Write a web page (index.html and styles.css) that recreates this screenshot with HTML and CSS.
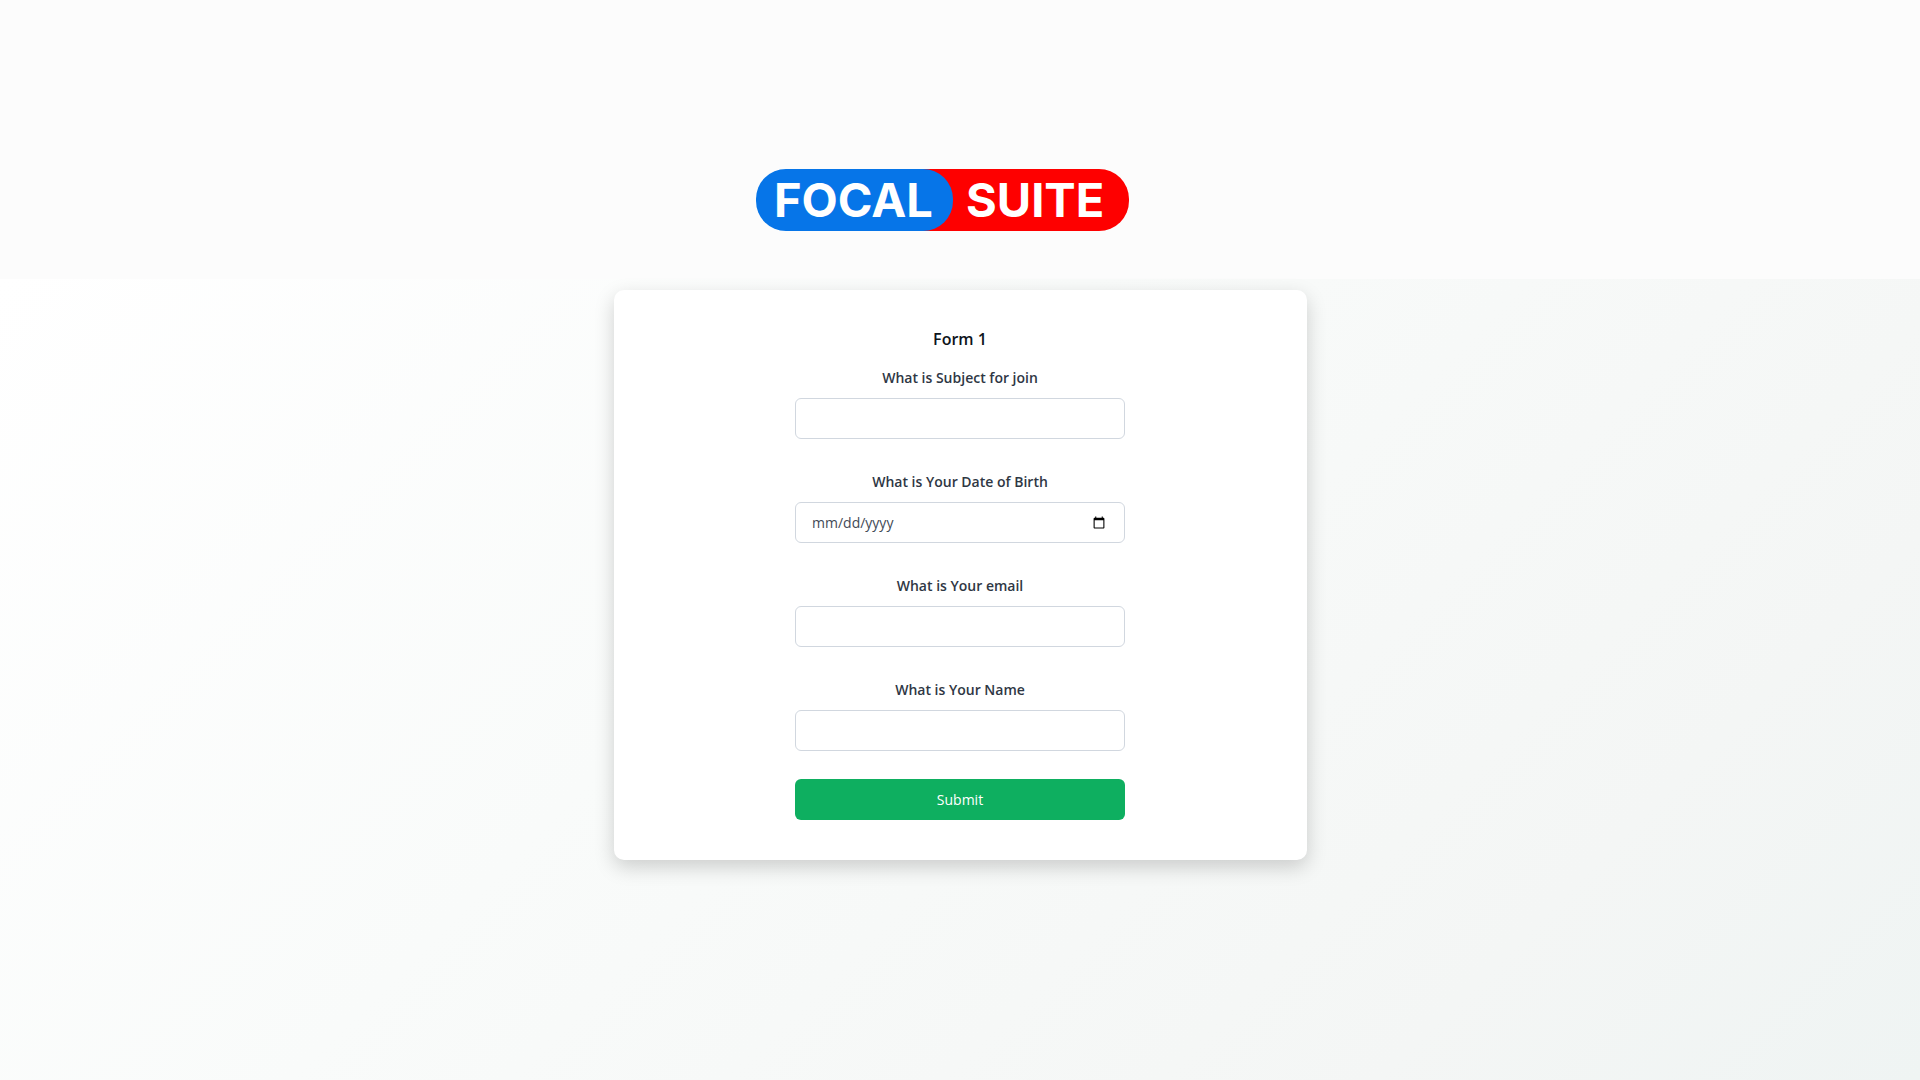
FILE: index.html
```html
<!DOCTYPE html>
<html lang="en">
<head>
<meta charset="utf-8">
<meta name="viewport" content="width=device-width, initial-scale=1">
<title>Form 1 - Focal Suite</title>
<link rel="stylesheet" href="styles.css">
</head>
<body>
<header class="page-header">
  <svg class="logo" viewBox="0 0 408 62" role="img" aria-label="Focal Suite">
    <rect class="logo-red" x="120" width="253" height="62" rx="30"/>
    <rect class="logo-blue" width="197" height="62" rx="30"/>
    <text class="logo-text" x="18" y="48">FOCAL</text>
    <text class="logo-text" x="210" y="48">SUITE</text>
  </svg>
</header>
<main class="page-main">
  <section class="card">
    <form class="form">
      <h1 class="form-title">Form 1</h1>
      <div class="field">
        <label class="label" for="subject">What is Subject for join</label>
        <input class="input" id="subject" type="text">
      </div>
      <div class="field">
        <label class="label" for="birth">What is Your Date of Birth</label>
        <input class="input" id="birth" type="date">
      </div>
      <div class="field">
        <label class="label" for="email">What is Your email</label>
        <input class="input" id="email" type="email">
      </div>
      <div class="field">
        <label class="label" for="name">What is Your Name</label>
        <input class="input" id="name" type="text">
      </div>
      <button class="submit" type="submit">Submit</button>
    </form>
  </section>
</main>
</body>
</html>
```
FILE: styles.css
```css
* {
  box-sizing: border-box;
}

body {
  margin: 0;
  min-height: 100vh;
  display: flex;
  flex-direction: column;
  font-family: "Open Sans", "Noto Sans", sans-serif;
  font-size: 14px;
  line-height: 21px;
  color: #2f3744;
  background: #fff;
}

.page-header {
  display: flex;
  justify-content: center;
  padding: 169px 16px 48px;
  background: #fcfcfc;
}

.logo {
  width: 408px;
  max-width: 100%;
  height: auto;
}

.logo-red {
  fill: #fe0000;
}

.logo-blue {
  fill: #0675e8;
}

.logo-text {
  fill: #fff;
  font-family: Inter, sans-serif;
  font-size: 47px;
  font-weight: 700;
}

.page-main {
  flex: 1;
  padding: 11px 16px 40px;
  background: linear-gradient(135deg, #fff 0%, #f9fbfa 40%, #f4f6f5 80%, #eff4f3 100%);
}

.card {
  max-width: 693px;
  margin: 0 auto;
  padding: 37px 16px 40px;
  border-radius: 10px;
  background: #fff;
  box-shadow: 0 7px 20px rgba(0, 0, 0, 0.18);
}

.form {
  display: flex;
  flex-direction: column;
  max-width: 330px;
  margin: 0 auto;
}

.form-title {
  margin: 0 0 16px;
  font-size: 16px;
  font-weight: 600;
  line-height: 24px;
  text-align: center;
  color: #0e141b;
}

.field {
  display: flex;
  flex-direction: column;
  gap: 10px;
  margin-bottom: 32px;
}

.field:last-of-type {
  margin-bottom: 28px;
}

.label {
  font-weight: 600;
  text-align: center;
}

.input {
  width: 100%;
  height: 41px;
  padding: 8px 16px;
  border: 1px solid #d1d7df;
  border-radius: 6px;
  font: inherit;
  color: #434a56;
  background: #fff;
}

.input::-webkit-datetime-edit-month-field,
.input::-webkit-datetime-edit-day-field,
.input::-webkit-datetime-edit-year-field {
  padding: 0;
}

.submit {
  height: 41px;
  padding: 8px 16px;
  border: 0;
  border-radius: 6px;
  font: inherit;
  font-weight: 500;
  color: #fff;
  background: #0eaf60;
}
```
